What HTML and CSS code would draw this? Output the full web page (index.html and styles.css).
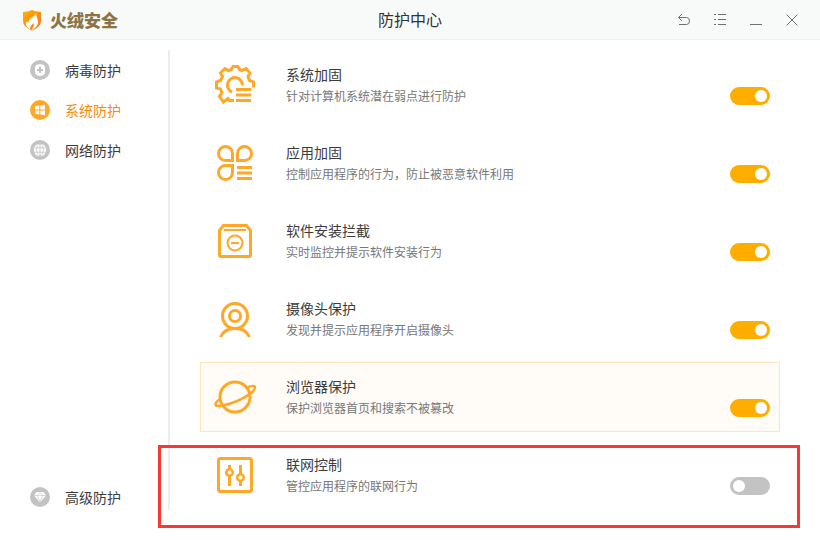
FILE: index.html
```html
<!DOCTYPE html>
<html lang="zh-CN">
<head>
    <meta charset="UTF-8">
    <meta name="viewport" content="width=device-width, initial-scale=1.0">
    <title>火绒安全 - 防护中心</title>
    <link rel="stylesheet" href="styles.css">
</head>
<body>

    <!-- Title bar -->
    <header class="title-bar">
        <div class="logo">
            <svg class="logo-img" width="20" height="22" viewBox="0 0 20 22">
                <defs>
                    <linearGradient id="shield" x1="0" y1="0" x2="1" y2="1">
                        <stop offset="0" stop-color="#ffb400"/>
                        <stop offset="1" stop-color="#f7701c"/>
                    </linearGradient>
                </defs>
                <path d="M1 3 Q6 3 10 1 Q14 3 19 3 V12 Q19 18 10 21.500 Q1 18 1 12Z" fill="url(#shield)"/>
                <path d="M14 4 C14 8 16.500 10 16 14 C15.600 17 13 20 9 21.500 C12 18 12 16 11.500 14 C10 16 8 17 8 20.500 C4 18 3 15 5 12 C5.500 14 6 14 6.500 14 C6 9 12 9 14 4Z" fill="#fff"/>
            </svg>
            <span>火绒安全</span>
        </div>
        <h1>防护中心</h1>
        <div class="window-buttons">
            <button type="button" aria-label="返回">
                <svg width="14" height="14" viewBox="0 0 14 14"><path d="M5 1 L1.500 4.500 L5 8 M1.500 4.500 H9.500 Q12.500 4.500 12.500 8 Q12.500 11.500 9.500 11.500 H2"/></svg>
            </button>
            <button type="button" aria-label="菜单">
                <svg width="14" height="14" viewBox="0 0 14 14"><path d="M1 1.500 H3 M5 1.500 H13 M1 6.500 H3 M5 6.500 H13 M1 11.500 H3 M5 11.500 H13"/></svg>
            </button>
            <button type="button" aria-label="最小化">
                <svg width="14" height="14" viewBox="0 0 14 14"><path d="M1 11.500 H13"/></svg>
            </button>
            <button type="button" aria-label="关闭">
                <svg width="14" height="14" viewBox="0 0 14 14"><path d="M1.500 1.500 L12.500 12.500 M12.500 1.500 L1.500 12.500"/></svg>
            </button>
        </div>
    </header>

    <div class="main">
        <!-- Side menu -->
        <nav class="side-menu">
            <a href="#virus">
                <svg width="20" height="20" viewBox="0 0 20 20">
                    <circle cx="10" cy="10" r="10" fill="currentColor"/>
                    <path d="M10 4 Q15 4.500 15 7 V12.500 Q15 15.500 10 16 Q5 15.500 5 12.500 V7 Q5 4.500 10 4Z" fill="#fff"/>
                    <path d="M10 7 V13 M7 10 H13" stroke="currentColor" stroke-width="2"/>
                </svg>
                <span>病毒防护</span>
            </a>
            <a href="#system" class="active">
                <svg width="20" height="20" viewBox="0 0 20 20">
                    <circle cx="10" cy="10" r="10" fill="currentColor"/>
                    <path d="M5 6.200 L9.300 5.600 V9.500 H5Z M10.300 5.400 L15 4.800 V9.500 H10.300Z M5 10.500 H9.300 V14.400 L5 13.800Z M10.300 10.500 H15 V15.200 L10.300 14.600Z" fill="#fff"/>
                </svg>
                <span>系统防护</span>
            </a>
            <a href="#network">
                <svg width="20" height="20" viewBox="0 0 20 20">
                    <circle cx="10" cy="10" r="10" fill="currentColor"/>
                    <circle cx="10" cy="10" r="6.300" fill="#fff"/>
                    <path d="M4 7.800 H16 M4 12.200 H16 M10 4 V16" stroke="currentColor" stroke-width="0.800" fill="none"/>
                    <ellipse cx="10" cy="10" rx="3.300" ry="6" stroke="currentColor" stroke-width="0.800" fill="none"/>
                </svg>
                <span>网络防护</span>
            </a>
            <a href="#advanced" class="advanced">
                <svg width="20" height="20" viewBox="0 0 20 20">
                    <circle cx="10" cy="10" r="10" fill="currentColor"/>
                    <path d="M6.500 5 H13.500 L16 8.500 L10 15.500 L4 8.500Z" fill="#fff"/>
                    <path d="M4 8.500 H16 M7.200 8.500 L10 15 L12.800 8.500 L10 5.500Z" stroke="currentColor" stroke-width="0.600" fill="none"/>
                </svg>
                <span>高级防护</span>
            </a>
        </nav>

        <!-- Protection list -->
        <ul class="protect-list">
            <li>
                <svg class="item-icon" width="42" height="42" viewBox="0 0 42 42">
                    <path d="M20 36.500 H15.500 L14 34.500 L9.500 38 L5.500 32.500 L8 28.500 L6.500 25 L2.500 24 V18 L6.500 16.500 L8.500 12.500 L6.500 9 L11 4.500 L14.500 6.500 L17.500 5.500 L19 2.500 H24 L25.500 5.500 L28 6.500 L32 4.500 L36 9 L34 12.500 L35.500 16.500 L39.500 18 V23.500"/>
                    <path d="M18 28 A7.500 7.500 0 1 1 28.500 21.500"/>
                    <path d="M22 25.500 H37 M22 31 H37 M22 36.500 H37"/>
                </svg>
                <div class="item-text">
                    <label for="sw-system">系统加固</label>
                    <p>针对计算机系统潜在弱点进行防护</p>
                </div>
                <input type="checkbox" class="switch" id="sw-system" checked>
            </li>
            <li>
                <svg class="item-icon" width="42" height="42" viewBox="0 0 42 42">
                    <path d="M18.500 18.500 H11.500 A7 7 0 1 1 18.500 11.500Z"/>
                    <path d="M23.500 18.500 H30.500 A7 7 0 1 0 23.500 11.500Z"/>
                    <path d="M18.500 23.500 H11.500 A7 7 0 1 0 18.500 30.500Z"/>
                    <path d="M23 25.500 H38 M23 31 H38 M23 36.500 H38"/>
                </svg>
                <div class="item-text">
                    <label for="sw-app">应用加固</label>
                    <p>控制应用程序的行为，防止被恶意软件利用</p>
                </div>
                <input type="checkbox" class="switch" id="sw-app" checked>
            </li>
            <li>
                <svg class="item-icon" width="42" height="42" viewBox="0 0 42 42">
                    <path d="M9.500 5.500 H32.500 L36.500 10.500 V35 Q36.500 36.500 35 36.500 H7 Q5.500 36.500 5.500 35 V10.500Z"/>
                    <path d="M10 10 H32" stroke-width="2"/>
                    <circle cx="21" cy="23" r="7.500" stroke-width="2"/>
                    <path d="M17 23 H25" stroke-width="2"/>
                </svg>
                <div class="item-text">
                    <label for="sw-install">软件安装拦截</label>
                    <p>实时监控并提示软件安装行为</p>
                </div>
                <input type="checkbox" class="switch" id="sw-install" checked>
            </li>
            <li>
                <svg class="item-icon" width="42" height="42" viewBox="0 0 42 42">
                    <circle cx="21" cy="18" r="12.500"/>
                    <circle cx="21" cy="18" r="5.500"/>
                    <path d="M6.500 39 C9 33 14 30.500 21 30.500 C28 30.500 33 33 35.500 39"/>
                </svg>
                <div class="item-text">
                    <label for="sw-camera">摄像头保护</label>
                    <p>发现并提示应用程序开启摄像头</p>
                </div>
                <input type="checkbox" class="switch" id="sw-camera" checked>
            </li>
            <li class="hover">
                <svg class="item-icon" width="42" height="42" viewBox="0 0 42 42">
                    <circle cx="21" cy="21" r="15"/>
                    <path d="M33 11.500 C38 9.500 41 9.500 41 11.500 C41 15 33 21 22 25.500 C12 29.500 2 31.500 1.500 28.500 C1.500 27 3 25 6 23" stroke-width="2.600"/>
                </svg>
                <div class="item-text">
                    <label for="sw-browser">浏览器保护</label>
                    <p>保护浏览器首页和搜索不被篡改</p>
                </div>
                <input type="checkbox" class="switch" id="sw-browser" checked>
            </li>
            <li class="marked">
                <svg class="item-icon" width="42" height="42" viewBox="0 0 42 42">
                    <rect x="4.500" y="4.500" width="33" height="33" rx="2"/>
                    <path d="M15.500 11 V16 M15.500 21 V32 M26.500 11 V21 M26.500 26 V32"/>
                    <circle cx="15.500" cy="18.500" r="3.300" stroke-width="2.500"/>
                    <circle cx="26.500" cy="23.500" r="3.300" stroke-width="2.500"/>
                </svg>
                <div class="item-text">
                    <label for="sw-net">联网控制</label>
                    <p>管控应用程序的联网行为</p>
                </div>
                <input type="checkbox" class="switch" id="sw-net">
            </li>
        </ul>
    </div>

</body>
</html>
```
FILE: styles.css
```css
:root {
    --orange: #ffa726;
    --switch-on: #ffae00;
    --grey: #c3c3c3;
    --red: #f83838;
}
* {
    box-sizing: border-box;
}
body {
    margin: 0;
    min-height: 100vh;
    font-family: "Noto Sans CJK SC", sans-serif;
    font-size: 14px;
    line-height: 20px;
    color: #3c3c3c;
    background-color: #fff;
}

/* title bar */
.title-bar {
    display: grid;
    grid-template-columns: 1fr auto 1fr;
    align-items: center;
    height: 40px;
    padding: 0 21px;
    background-color: #f8faf9;
    border-bottom: 1px solid #eee;
}
.logo {
    display: flex;
    align-items: center;
    gap: 8px;
    padding-left: 1px;
    font-size: 17px;
    font-weight: 900;
    color: #8d7443;
}
.title-bar h1 {
    margin: 0;
    padding-bottom: 2px;
    font-size: 16px;
    font-weight: normal;
    color: #333;
}
.window-buttons {
    display: flex;
    justify-content: flex-end;
    gap: 22px;
}
.window-buttons button {
    display: flex;
    padding: 0;
    border: none;
    background: none;
    cursor: pointer;
}
.window-buttons svg {
    fill: none;
    stroke: #6c706e;
    stroke-width: 1;
}

.main {
    display: flex;
    padding: 10px 40px 30px 0;
}

/* side menu */
.side-menu {
    display: flex;
    flex-direction: column;
    flex: none;
    width: 170px;
    padding-left: 30px;
    border-right: 2px solid #eee;
}
.side-menu a {
    display: flex;
    align-items: center;
    gap: 15px;
    height: 40px;
    color: inherit;
    text-decoration: none;
}
.side-menu svg {
    color: var(--grey);
}
.side-menu .active {
    color: #f78b0c;
}
.side-menu .active svg {
    color: var(--orange);
}
.side-menu .advanced {
    height: 26px;
    margin-top: auto;
}

/* protection list */
.protect-list {
    display: flex;
    flex-direction: column;
    flex: 1;
    gap: 8px;
    margin: 0 0 0 30px;
    padding: 0;
    list-style: none;
}
.protect-list li {
    position: relative;
    display: flex;
    align-items: center;
    height: 70px;
    padding: 0 9px 0 13px;
    border: 1px solid transparent;
}
.protect-list .hover {
    background-color: #fffbf6;
    border-color: #fde6bd;
}
.marked::after {
    content: "";
    position: absolute;
    top: 4px;
    right: -21px;
    bottom: -19px;
    left: -43px;
    border: 3px solid var(--red);
    pointer-events: none;
}
.item-icon {
    flex: none;
    fill: none;
    stroke: var(--orange);
    stroke-width: 3;
}
.item-text {
    flex: 1;
    margin-left: 30px;
}
.item-text label {
    display: block;
    margin-bottom: 2px;
}
.item-text p {
    margin: 0;
    font-size: 12px;
    color: #777;
}
.switch {
    appearance: none;
    align-self: flex-end;
    width: 40px;
    height: 18px;
    margin: 0 0 14px;
    padding: 3px;
    border-radius: 9px;
    background-color: var(--grey);
    cursor: pointer;
}
.switch::before {
    content: "";
    display: block;
    width: 12px;
    height: 12px;
    border-radius: 50%;
    background-color: #fff;
}
.switch:checked {
    background-color: var(--switch-on);
}
.switch:checked::before {
    margin-left: auto;
}
```
